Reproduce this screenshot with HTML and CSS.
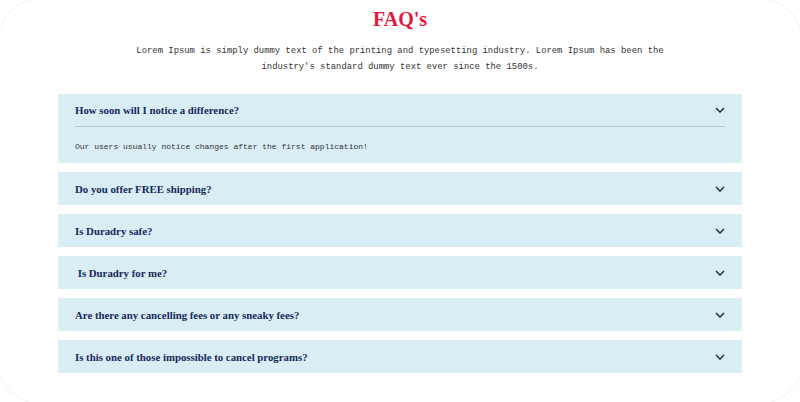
FILE: index.html
```html
<!DOCTYPE html>
<html>
<head>
<meta charset="utf-8">
<link rel="stylesheet" href="styles.css">
</head>
<body>
<div class="page">
  <h1 class="title">FAQ's</h1>
  <p class="intro">Lorem Ipsum is simply dummy text of the printing and typesetting industry. Lorem Ipsum has been the industry's standard dummy text ever since the 1500s.</p>
  <div class="faq">
    <div class="item open">
      <div class="q"><span>How soon will I notice a difference?</span><svg class="chev" viewBox="0 0 10 6" width="10" height="6"><path d="M1 1l4 4 4-4"/></svg></div>
      <div class="a">Our users usually notice changes after the first application!</div>
    </div>
    <div class="item">
      <div class="q"><span>Do you offer FREE shipping?</span><svg class="chev" viewBox="0 0 10 6" width="10" height="6"><path d="M1 1l4 4 4-4"/></svg></div>
    </div>
    <div class="item">
      <div class="q"><span>Is Duradry safe?</span><svg class="chev" viewBox="0 0 10 6" width="10" height="6"><path d="M1 1l4 4 4-4"/></svg></div>
    </div>
    <div class="item">
      <div class="q"><span>&nbsp;Is Duradry for me?</span><svg class="chev" viewBox="0 0 10 6" width="10" height="6"><path d="M1 1l4 4 4-4"/></svg></div>
    </div>
    <div class="item">
      <div class="q"><span>Are there any cancelling fees or any sneaky fees?</span><svg class="chev" viewBox="0 0 10 6" width="10" height="6"><path d="M1 1l4 4 4-4"/></svg></div>
    </div>
    <div class="item">
      <div class="q"><span>Is this one of those impossible to cancel programs?</span><svg class="chev" viewBox="0 0 10 6" width="10" height="6"><path d="M1 1l4 4 4-4"/></svg></div>
    </div>
  </div>
</div>
</body>
</html>
```
FILE: styles.css
```css
html, body {
  margin: 0;
  padding: 0;
  background: #fff;
  overflow: hidden;
}
.page {
  box-sizing: border-box;
  height: 408px;
  margin: -3px;
  border: 1px dotted #e6e6e6;
  border-radius: 46px;
  padding-top: 9px;
}
.title {
  margin: 0;
  text-align: center;
  font-family: "Liberation Serif", serif;
  font-weight: bold;
  font-size: 20px;
  line-height: 24px;
  color: #e3173e;
}
.intro {
  width: 540px;
  margin: 12px auto 0;
  text-align: center;
  font-family: "Liberation Mono", monospace;
  font-size: 8.9px;
  line-height: 16px;
  color: #333;
}
.faq {
  width: 684px;
  margin: 19px auto 0;
  display: flex;
  flex-direction: column;
  gap: 9px;
}
.item {
  background: #d9edf5;
  padding: 0 17px;
}
.q {
  display: flex;
  align-items: center;
  justify-content: space-between;
  height: 33px;
  font-family: "Liberation Serif", serif;
  font-weight: bold;
  font-size: 10.8px;
  color: #15295c;
}
.open .q {
  height: 32px;
  border-bottom: 1px solid #b4cbd5;
}
.chev {
  fill: none;
  stroke: #2e3440;
  stroke-width: 1.6;
}
.a {
  padding: 15px 0 11px;
  font-family: "Liberation Mono", monospace;
  font-size: 8px;
  line-height: 10px;
  color: #333;
}
```
